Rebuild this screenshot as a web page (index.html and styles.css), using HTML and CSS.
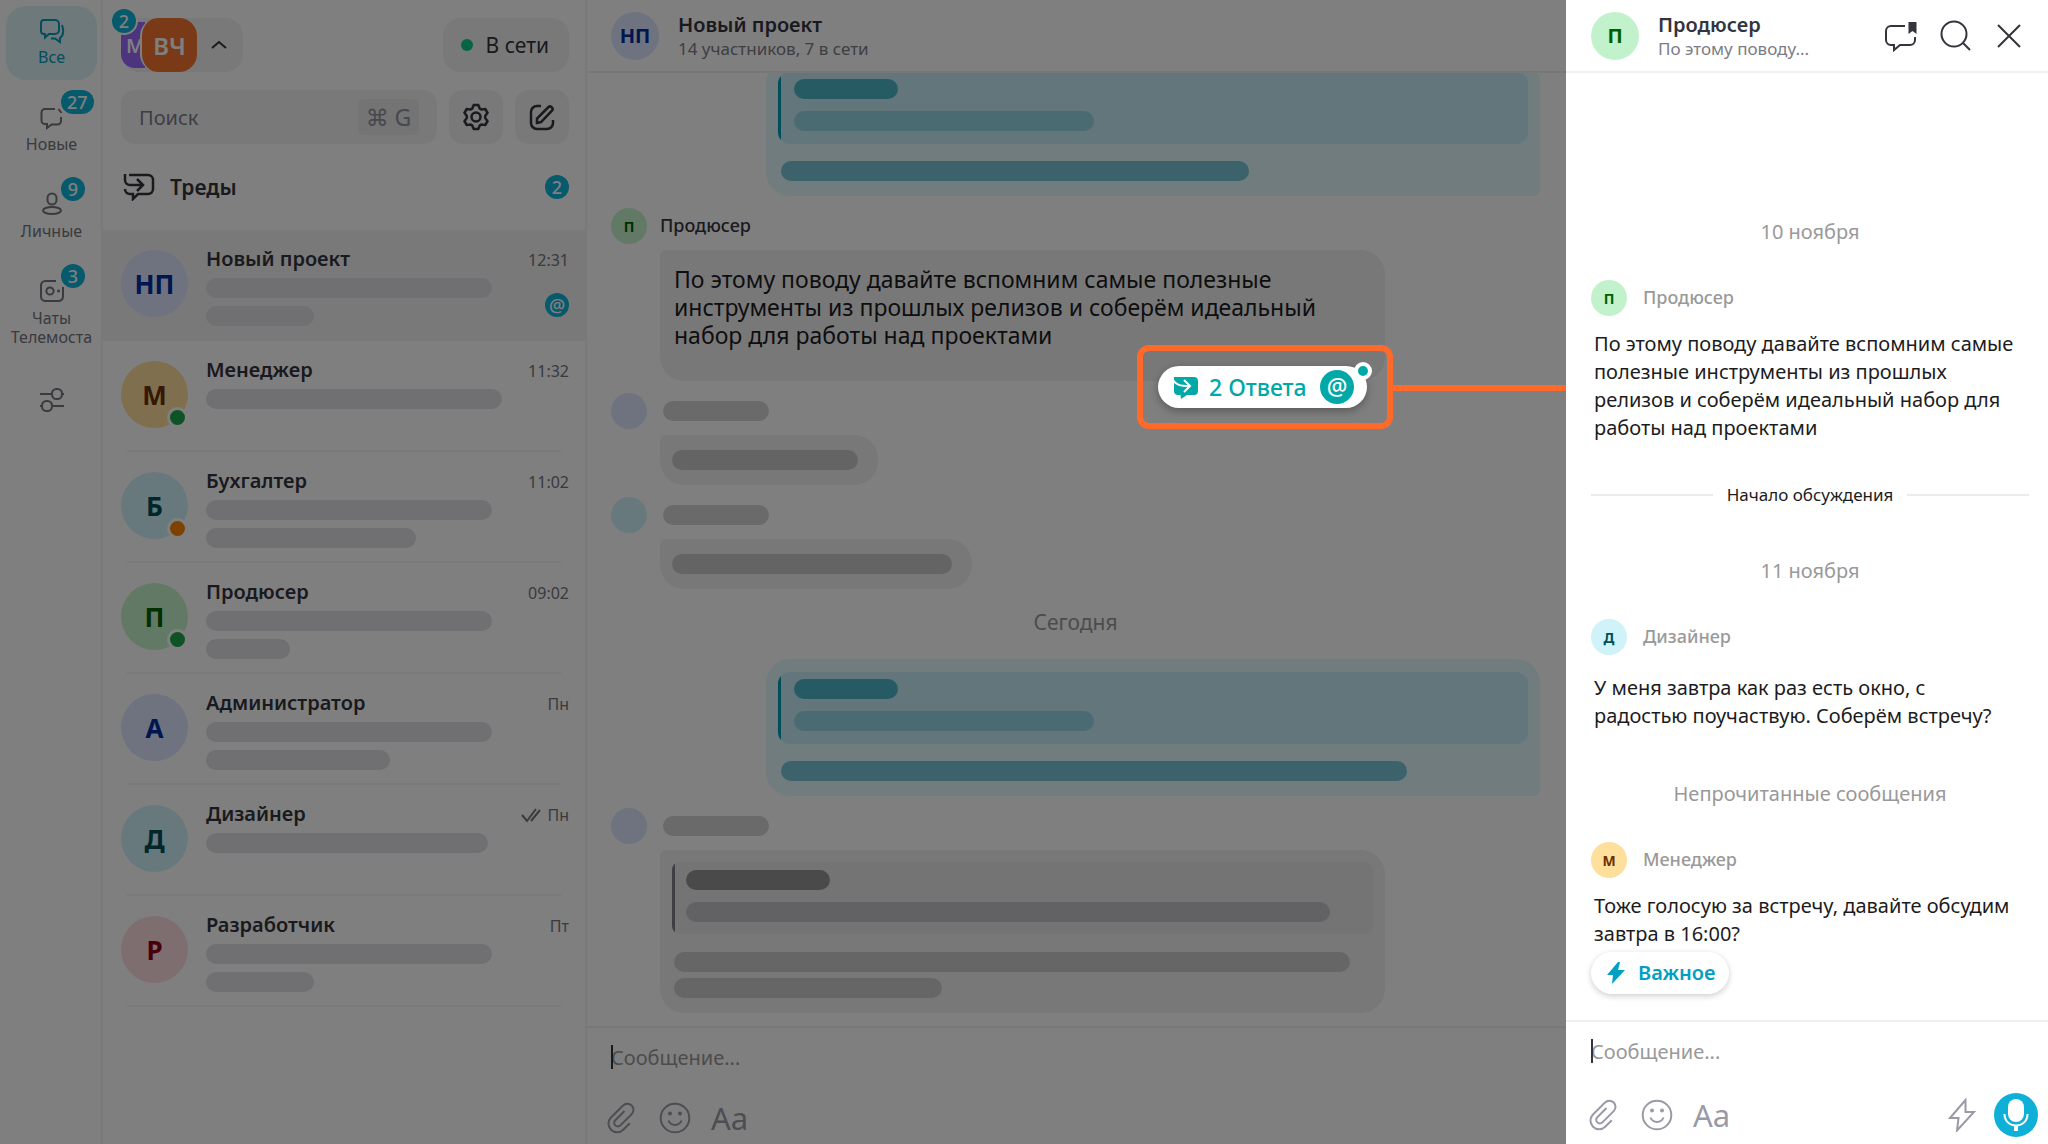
FILE: index.html
```
<!DOCTYPE html>
<html lang="ru">
  <head>
    <meta charset="UTF-8" />
    <meta name="viewport" content="width=device-width, initial-scale=1.0" />
    <title>Мессенджер — треды</title>
    <link rel="stylesheet" href="styles.css">
  </head>
  <body>
    <!-- Общие иконки -->
    <svg class="sprite" aria-hidden="true">
      <symbol id="icon-clip" viewBox="0 0 28 32">
        <path d="M17.5 9 8.3 18.2a3.6 3.6 0 0 0 0 5.2 3.6 3.6 0 0 0 5.1 0L24.7 12.1a6 6 0 0 0 0-8.6 6 6 0 0 0-8.7 0L4 15.500a8.6 8.6 0 0 0 0 12.200 8.6 8.6 0 0 0 12.200 0l6.600-6.500" />
      </symbol>
      <symbol id="icon-smile" viewBox="0 0 32 32">
        <circle cx="16" cy="16" r="14.3" />
        <path d="M9.500 18.500a7 7 0 0 0 13 0" />
        <circle class="dot" cx="11" cy="11.500" r="2" />
        <circle class="dot" cx="21" cy="11.500" r="2" />
      </symbol>
    </svg>

    <div class="app">
      <nav class="rail">
        <a href="#" class="rail-item active">
          <svg class="icon" viewBox="0 0 28 28">
            <path d="M6 4h11a4 4 0 0 1 4 4v6a4 4 0 0 1-4 4h-6l-4 3.500V18H6a3 3 0 0 1-3-3V7a3 3 0 0 1 3-3z" />
            <path d="M24 9c1.500 4 1.500 8 0 11l-2 2v4l-5-3.500h-4" />
          </svg>
          <span>Все</span>
        </a>
        <a href="#" class="rail-item">
          <svg class="icon" viewBox="0 0 28 28">
            <path d="M17 6H7a3.500 3.500 0 0 0-3.500 3.500v8A3.500 3.500 0 0 0 7 21h2v4l4.500-3.500h6A3.500 3.500 0 0 0 23 18v-4M20.500 6l3 4" />
          </svg>
          <span>Новые</span>
          <span class="badge">27</span>
        </a>
        <a href="#" class="rail-item">
          <svg class="icon" viewBox="0 0 28 28">
            <rect x="9.500" y="3.500" width="9" height="11" rx="4.500" />
            <ellipse cx="14" cy="20.500" rx="9" ry="3.600" />
          </svg>
          <span>Личные</span>
          <span class="badge">9</span>
        </a>
        <a href="#" class="rail-item">
          <svg class="icon" viewBox="0 0 28 28">
            <path d="M18 4H7.500A4.500 4.500 0 0 0 3 8.500v11A4.500 4.500 0 0 0 7.500 24h13a4.500 4.500 0 0 0 4.500-4.500V10" />
            <circle cx="12" cy="14" r="3.600" />
            <circle class="dot" cx="20.500" cy="14" r="1.500" />
          </svg>
          <span>Чаты Телемоста</span>
          <span class="badge">3</span>
        </a>
        <button class="rail-item filters" aria-label="Настроить папки">
          <svg class="icon" viewBox="0 0 28 28">
            <path d="M2 8h12M24 8h2M2 20h2M14 20h12" />
            <rect x="14" y="3" width="10" height="10" rx="4.500" />
            <rect x="4" y="15" width="10" height="10" rx="4.500" />
          </svg>
        </button>
      </nav>

      <aside class="chats">
        <div class="account-bar">
          <button class="account">
            <span class="account-back">М</span>
            <span class="account-main">ВЧ</span>
            <svg class="icon" viewBox="0 0 20 20"><path d="m3 13 7-6 7 6" /></svg>
            <span class="badge">2</span>
          </button>
          <button class="status"><span class="status-dot"></span>В сети</button>
        </div>
        <div class="search-bar">
          <label class="search">
            <input type="text" placeholder="Поиск" aria-label="Поиск" />
            <kbd>⌘ G</kbd>
          </label>
          <button class="square" aria-label="Настройки">
            <svg class="icon" viewBox="0 0 28 28">
              <path stroke-width="2.5" d="M11.800 2h4.400l1.600 3.600 1.500.9 4-.5 2.200 3.800-2.300 3.300v1.800l2.300 3.300-2.200 3.800-4-.5-1.500.9-1.600 3.600h-4.400l-1.600-3.600-1.500-.9-4 .5-2.200-3.800 2.300-3.300v-1.800L2.500 9.800 4.700 6l4 .5 1.500-.9z" />
              <circle stroke-width="2.5" cx="14" cy="14" r="4.500" />
            </svg>
          </button>
          <button class="square" aria-label="Новый чат">
            <svg class="icon" viewBox="0 0 28 28">
              <path stroke-width="2.5" d="M13 3H9a6 6 0 0 0-6 6v11a6 6 0 0 0 6 6h10a6 6 0 0 0 6-6v-3" />
              <path stroke-width="2.5" d="M9 20v-4.500L20.500 4a2 2 0 0 1 2.800 0l.7.700a2 2 0 0 1 0 2.800L13 19z" />
            </svg>
          </button>
        </div>
        <a href="#" class="threads">
          <svg class="icon" viewBox="0 0 32 28">
            <path stroke-width="2.5" d="M6 2h19a5 5 0 0 1 5 5v9a5 5 0 0 1-5 5H15l-5 5v-5H7a5 5 0 0 1-5-5" />
            <path stroke-width="2.5" d="M2 1v6a5 5 0 0 0 5 5h12M14 6l6 6-6 6" />
          </svg>
          <span>Треды</span>
          <span class="badge">2</span>
        </a>

        <ul class="chat-list">
          <li class="chat selected">
            <span class="avatar large blue">НП</span>
            <div class="chat-body">
              <span class="chat-name">Новый проект</span>
              <time>12:31</time>
              <span class="line" style="width: 286px"></span>
              <span class="line" style="width: 108px"></span>
            </div>
            <span class="badge">@</span>
          </li>
          <li class="chat">
            <span class="avatar large yellow online">М</span>
            <div class="chat-body">
              <span class="chat-name">Менеджер</span>
              <time>11:32</time>
              <span class="line" style="width: 296px"></span>
            </div>
          </li>
          <li class="chat">
            <span class="avatar large cyan away">Б</span>
            <div class="chat-body">
              <span class="chat-name">Бухгалтер</span>
              <time>11:02</time>
              <span class="line" style="width: 286px"></span>
              <span class="line" style="width: 210px"></span>
            </div>
          </li>
          <li class="chat">
            <span class="avatar large green online">П</span>
            <div class="chat-body">
              <span class="chat-name">Продюсер</span>
              <time>09:02</time>
              <span class="line" style="width: 286px"></span>
              <span class="line" style="width: 84px"></span>
            </div>
          </li>
          <li class="chat">
            <span class="avatar large blue">А</span>
            <div class="chat-body">
              <span class="chat-name">Администратор</span>
              <time>Пн</time>
              <span class="line" style="width: 286px"></span>
              <span class="line" style="width: 184px"></span>
            </div>
          </li>
          <li class="chat">
            <span class="avatar large cyan">Д</span>
            <div class="chat-body">
              <span class="chat-name">Дизайнер</span>
              <time>
                <svg class="icon" viewBox="0 0 20 16"><path d="m1 8 5 6L15 2M10 14l9-11" /></svg>
                Пн
              </time>
              <span class="line" style="width: 282px"></span>
            </div>
          </li>
          <li class="chat">
            <span class="avatar large red">Р</span>
            <div class="chat-body">
              <span class="chat-name">Разработчик</span>
              <time>Пт</time>
              <span class="line" style="width: 286px"></span>
              <span class="line" style="width: 108px"></span>
            </div>
          </li>
        </ul>
      </aside>

      <main class="dialog">
        <header class="header">
          <span class="avatar medium blue">НП</span>
          <div class="header-text">
            <h1>Новый проект</h1>
            <p>14 участников, 7 в сети</p>
          </div>
        </header>

        <div class="messages">
          <div class="bubble own">
            <div class="quote">
              <span class="line dark" style="width: 104px"></span>
              <span class="line" style="width: 300px"></span>
            </div>
            <span class="line" style="width: 468px"></span>
          </div>

          <article class="message">
            <div class="author">
              <span class="avatar small green">П</span>
              <span class="author-name">Продюсер</span>
            </div>
            <div class="bubble wide">
              <p>По этому поводу давайте вспомним самые полезные<br>инструменты из прошлых релизов и соберём идеальный<br>набор для работы над проектами</p>
              <div class="callout">
                <button class="replies">
                  <svg class="replies-icon" viewBox="0 0 26 24">
                    <path d="M5 2h16a4 4 0 0 1 4 4v10a4 4 0 0 1-4 4h-7l-6 4-.5-4H5a4 4 0 0 1-4-4V2z" />
                    <path class="arrow" d="M0 5c3 5 7 6 16 6M11 5l6 6-6 6" />
                  </svg>
                  2 Ответа
                  <span class="mention">@</span>
                </button>
              </div>
            </div>
          </article>

          <article class="message">
            <div class="author">
              <span class="avatar small blue"></span>
              <span class="line name"></span>
            </div>
            <div class="bubble short"><span class="line" style="width: 186px"></span></div>
          </article>

          <article class="message">
            <div class="author">
              <span class="avatar small cyan"></span>
              <span class="line name"></span>
            </div>
            <div class="bubble short"><span class="line" style="width: 280px"></span></div>
          </article>

          <div class="today">Сегодня</div>

          <div class="bubble own">
            <div class="quote">
              <span class="line dark" style="width: 104px"></span>
              <span class="line" style="width: 300px"></span>
            </div>
            <span class="line" style="width: 626px"></span>
          </div>

          <article class="message">
            <div class="author">
              <span class="avatar small blue"></span>
              <span class="line name"></span>
            </div>
            <div class="bubble wide quoted">
              <div class="quote">
                <span class="line dark" style="width: 144px"></span>
                <span class="line" style="width: 644px"></span>
              </div>
              <span class="line" style="width: 676px"></span>
              <span class="line" style="width: 268px"></span>
            </div>
          </article>
        </div>

        <form class="composer">
          <div class="field">
            <input type="text" placeholder="Сообщение..." aria-label="Сообщение" />
          </div>
          <div class="tools">
            <button type="button" aria-label="Прикрепить файл"><svg class="icon clip"><use href="#icon-clip" /></svg></button>
            <button type="button" aria-label="Эмодзи"><svg class="icon smile"><use href="#icon-smile" /></svg></button>
            <button type="button" class="format" aria-label="Форматирование">Aa</button>
          </div>
        </form>
      </main>

      <!-- Затемнение под открытым тредом -->
      <div class="overlay"></div>

      <section class="thread">
        <header class="header">
          <span class="avatar medium green">П</span>
          <div class="header-text">
            <h2>Продюсер</h2>
            <p>По этому поводу...</p>
          </div>
          <div class="header-actions">
            <button aria-label="Закладки">
              <svg class="icon" viewBox="0 0 34 34">
                <path d="M21 7H7a5 5 0 0 0-5 5v9a5 5 0 0 0 5 5h3v5l6-5h10a5 5 0 0 0 5-5v-3" />
                <path class="solid" d="M24.500 3h8v12l-4-3-4 3z" />
              </svg>
            </button>
            <button aria-label="Поиск">
              <svg class="icon" viewBox="0 0 34 34">
                <circle cx="16" cy="15" r="12.500" />
                <path d="m25 24 7 7" />
              </svg>
            </button>
            <button aria-label="Закрыть">
              <svg class="icon" viewBox="0 0 34 34"><path d="m6 6 22 22M28 6 6 28" /></svg>
            </button>
          </div>
        </header>

        <div class="replies-list">
          <div class="date">10 ноября</div>
          <article class="reply">
            <div class="author">
              <span class="avatar small green">П</span>
              <span class="author-name">Продюсер</span>
            </div>
            <p>По этому поводу давайте вспомним самые<br>полезные инструменты из прошлых<br>релизов и соберём идеальный набор для<br>работы над проектами</p>
          </article>
          <div class="divider">Начало обсуждения</div>
          <div class="date">11 ноября</div>
          <article class="reply spaced">
            <div class="author">
              <span class="avatar small cyan">Д</span>
              <span class="author-name">Дизайнер</span>
            </div>
            <p>У меня завтра как раз есть окно, с<br>радостью поучаствую. Соберём встречу?</p>
          </article>
          <div class="date">Непрочитанные сообщения</div>
          <article class="reply">
            <div class="author">
              <span class="avatar small yellow">М</span>
              <span class="author-name">Менеджер</span>
            </div>
            <p>Тоже голосую за встречу, давайте обсудим<br>завтра в 16:00?</p>
            <button class="important">
              <svg viewBox="0 0 20 24"><path d="M12 1 1 14h6l-1 9 13-14h-7l2-8z" /></svg>
              Важное
            </button>
          </article>
        </div>

        <form class="composer">
          <div class="field">
            <input type="text" placeholder="Сообщение..." aria-label="Ответ в треде" />
          </div>
          <div class="tools">
            <button type="button" aria-label="Прикрепить файл"><svg class="icon clip"><use href="#icon-clip" /></svg></button>
            <button type="button" aria-label="Эмодзи"><svg class="icon smile"><use href="#icon-smile" /></svg></button>
            <button type="button" class="format" aria-label="Форматирование">Aa</button>
            <button type="button" class="bolt" aria-label="Важное сообщение">
              <svg class="icon" viewBox="0 0 28 34"><path d="M17.500 2 2 20h8.500L9 32.500 26 14h-8.500z" /></svg>
            </button>
            <button type="button" class="mic" aria-label="Голосовое сообщение">
              <svg viewBox="0 0 44 44">
                <rect x="14" y="6" width="16" height="23" rx="8" />
                <path d="M10.500 21c0 7 5 11.500 11.500 11.500S33.500 28 33.500 21" />
                <path class="stem" d="M22 32v6" />
              </svg>
            </button>
          </div>
        </form>
      </section>
    </div>
  </body>
</html>
```
FILE: styles.css
```
*,
*::before,
*::after {
  box-sizing: border-box;
}

body {
  margin: 0;
  font-family: 'Noto Sans', 'Open Sans', sans-serif;
  font-size: 20px;
  color: #34343c;
  background-color: #fff;
}

h1,
h2,
p,
ul {
  margin: 0;
  padding: 0;
}

a {
  color: inherit;
  text-decoration: none;
}

button,
input {
  font: inherit;
  color: inherit;
  border: none;
  background: none;
  padding: 0;
}

button {
  cursor: pointer;
}

input {
  width: 100%;
  outline: none;
}

.sprite {
  display: none;
}

.icon {
  flex: none;
  width: 28px;
  height: 28px;
  fill: none;
  stroke: currentColor;
  stroke-width: 2;
}

.icon .dot,
.dot {
  fill: currentColor;
  stroke: none;
}

.app {
  position: relative;
  display: flex;
  height: 100vh;
  overflow: hidden;
}

/* Затемняет всё, кроме треда и выделенной кнопки */
.overlay {
  position: absolute;
  inset: 0;
  z-index: 1;
  background-color: rgba(0, 0, 0, 0.5);
}

.badge {
  display: flex;
  align-items: center;
  justify-content: center;
  min-width: 24px;
  height: 24px;
  padding: 0 6px;
  border-radius: 12px;
  background-color: #0cb4d8;
  color: #fff;
  font-size: 18px;
  font-weight: 500;
  line-height: 24px;
}

/* Аватары */
.avatar {
  position: relative;
  flex: none;
  display: flex;
  align-items: center;
  justify-content: center;
  border-radius: 50%;
  font-weight: 700;
}

.avatar.large {
  width: 67px;
  height: 67px;
  font-size: 26px;
}

.avatar.medium {
  width: 48px;
  height: 48px;
  font-size: 20px;
}

.avatar.small {
  width: 36px;
  height: 36px;
  font-size: 14px;
}

.blue {
  background-color: #dce6ff;
  color: #002ca0;
}

.yellow {
  background-color: #ffdf9c;
  color: #6b3000;
}

.cyan {
  background-color: #cff3f8;
  color: #005058;
}

.green {
  background-color: #c2f2cb;
  color: #006000;
}

.red {
  background-color: #ffdce0;
  color: #900010;
}

.online::after,
.away::after {
  content: '';
  position: absolute;
  right: 0;
  bottom: 0;
  width: 21px;
  height: 21px;
  border: 3px solid #fff;
  border-radius: 50%;
  background-color: #1ea54c;
}

.away::after {
  background-color: #fa8200;
}

/* Заглушки вместо текста */
.line {
  display: block;
  height: 20px;
  max-width: 100%;
  border-radius: 10px;
  background-color: #e0e0e6;
}

/* Левая панель */
.rail {
  flex: none;
  display: flex;
  flex-direction: column;
  gap: 13px;
  width: 103px;
  padding: 6px 4px 6px 6px;
  border-right: 2px solid #f2f2f3;
}

.rail-item {
  position: relative;
  display: flex;
  flex-direction: column;
  align-items: center;
  gap: 4px;
  min-height: 74px;
  padding-top: 10px;
  border-radius: 20px;
  color: #74747e;
  font-size: 16px;
  line-height: 19px;
  text-align: center;
}

.rail-item .badge {
  position: absolute;
  top: -3px;
  left: 55px;
}

.rail-item.active {
  background-color: #daf2f6;
  color: #0a9ab8;
}

.rail-item.filters {
  margin-top: 16px;
}

/* Список чатов */
.chats {
  flex: none;
  width: 484px;
  border-right: 2px solid #f2f2f3;
}

.account-bar,
.search-bar {
  display: flex;
  gap: 12px;
  padding: 18px 16px 0 18px;
}

.account-bar {
  justify-content: space-between;
}

.account {
  position: relative;
  display: flex;
  align-items: center;
  height: 54px;
  padding-right: 14px;
  border-radius: 18px;
  background-color: #f2f2f3;
  color: #34343c;
}

.account-back,
.account-main {
  display: flex;
  align-items: center;
  color: #fff;
  font-weight: 600;
}

.account-back {
  width: 24px;
  height: 46px;
  padding-left: 5px;
  border-radius: 14px 0 0 14px;
  background-color: #9868ff;
  overflow: hidden;
}

.account-main {
  justify-content: center;
  width: 57px;
  height: 54px;
  margin-left: -5px;
  margin-right: 12px;
  border-left: 2px solid #fff;
  border-radius: 18px;
  background-color: #f4742f;
  font-size: 24px;
}

.account .icon {
  width: 20px;
  height: 20px;
}

.account .badge {
  position: absolute;
  top: -9px;
  left: -9px;
  box-shadow: 0 0 0 2px #fff;
}

.status {
  display: flex;
  align-items: center;
  gap: 13px;
  height: 54px;
  padding: 0 20px 0 18px;
  border-radius: 18px;
  background-color: #f2f2f3;
  font-size: 21px;
}

.status-dot {
  width: 12px;
  height: 12px;
  border-radius: 50%;
  background-color: #0cc88c;
}

.search {
  flex: 1;
  display: flex;
  align-items: center;
  height: 54px;
  padding: 0 18px;
  border-radius: 14px;
  background-color: #f2f2f3;
}

.search input::placeholder {
  color: #7c7c88;
}

.search kbd {
  flex: none;
  width: 61px;
  border-radius: 6px;
  background-color: #e9e9eb;
  color: #9090a0;
  font-family: 'Noto Sans', 'DejaVu Sans', sans-serif;
  font-size: 23px;
  line-height: 36px;
  text-align: center;
}

.square {
  display: flex;
  align-items: center;
  justify-content: center;
  width: 54px;
  height: 54px;
  border-radius: 14px;
  background-color: #f2f2f3;
}

.threads {
  display: flex;
  align-items: center;
  gap: 15px;
  height: 86px;
  padding: 0 16px 0 20px;
  font-size: 21px;
  font-weight: 600;
}

.threads .icon {
  width: 32px;
}

.threads .badge {
  margin-left: auto;
}

.chat-list {
  list-style: none;
}

.chat {
  position: relative;
  display: flex;
  gap: 18px;
  height: 111px;
  padding: 20px 16px 0 18px;
}

.chat:not(.selected)::after {
  content: '';
  position: absolute;
  right: 24px;
  bottom: 0;
  left: 24px;
  height: 2px;
  background-color: #f2f2f3;
}

.chat.selected {
  background-color: #f2f2f2;
}

.chat-body {
  flex: 1;
  display: grid;
  grid-template-columns: 1fr auto;
  grid-auto-rows: 20px;
  gap: 8px 0;
}

.chat-name {
  font-size: 20px;
  font-weight: 600;
  line-height: 18px;
}

.chat time {
  display: flex;
  align-items: center;
  gap: 6px;
  color: #74747e;
  font-size: 16px;
  line-height: 18px;
}

.chat time .icon {
  width: 20px;
  height: 16px;
}

.chat-body .line {
  grid-column: 1 / 3;
}

.chat .badge {
  position: absolute;
  right: 16px;
  top: 63px;
  padding: 0;
}

/* Диалог */
.dialog {
  flex: 1;
  display: flex;
  flex-direction: column;
  min-width: 0;
}

.header {
  flex: none;
  display: flex;
  align-items: center;
  gap: 19px;
  height: 73px;
  padding: 0 22px 0 24px;
  border-bottom: 2px solid #f0f0f0;
}

.header h1,
.header h2 {
  font-size: 20px;
  font-weight: 600;
  line-height: 25px;
}

.header p {
  color: #7c7c88;
  font-size: 17px;
  line-height: 23px;
}

.messages {
  flex: 1;
  display: flex;
  flex-direction: column;
  justify-content: flex-end;
  gap: 12px;
  min-height: 0;
  padding: 0 26px 13px 24px;
  overflow: hidden;
}

.author {
  display: flex;
  align-items: center;
  gap: 13px;
}

.author-name {
  padding-bottom: 2px;
  font-size: 18px;
  font-weight: 500;
}

.line.name {
  width: 106px;
  margin-left: 3px;
  background-color: #d4d4d4;
}

.bubble {
  position: relative;
  width: fit-content;
  max-width: 100%;
  margin: 6px 0 0 49px;
  border-radius: 6px 24px 24px 24px;
  background-color: #f0f0f0;
}

.bubble.wide {
  width: 725px;
  padding: 15px 14px 32px;
}

.bubble p {
  color: #1c1c1e;
  font-size: 23px;
  line-height: 28px;
  white-space: nowrap;
}

.bubble.short {
  padding: 15px 20px 15px 12px;
}

.bubble.short .line {
  background-color: #c8c8c8;
}

.bubble.wide.quoted {
  display: grid;
  gap: 6px;
  padding: 12px 12px 15px;
}

.bubble.quoted > .line {
  margin-left: 2px;
  background-color: #ccc;
}

.bubble.own {
  align-self: flex-end;
  width: 774px;
  margin: 0;
  padding: 13px 12px 15px;
  border-radius: 24px 24px 6px 24px;
  background-color: #e0f8fa;
}

/* Цитата с полосой слева */
.quote {
  display: grid;
  gap: 12px;
  margin-bottom: 17px;
  padding: 7px 16px 13px;
  border-radius: 12px;
  background: linear-gradient(to right, #009ab8 3px, #c4ecf8 3px);
}

.own .line {
  margin-left: 3px;
  background-color: #78c4d6;
}

.own .quote .line {
  margin-left: 0;
  background-color: #94d6e4;
}

.own .quote .line.dark {
  background-color: #4eb6c8;
}

.quoted .quote {
  margin-bottom: 12px;
  padding: 8px 14px 12px;
  border-radius: 8px;
  background: linear-gradient(to right, #7c7c88 3px, #e9e9e9 3px);
}

.quoted .quote .line {
  background-color: #c4c4ca;
}

.quoted .quote .line.dark {
  background-color: #959595;
}

.today {
  padding-bottom: 4px;
  color: #999;
  font-size: 21px;
  line-height: 42px;
  text-align: center;
}

/* Рамка вокруг кнопки с ответами и линия к треду */
.callout {
  position: absolute;
  right: -8px;
  bottom: -48px;
  z-index: 2;
  padding: 15px 20px 15px 15px;
  border: 6px solid #ff6a2b;
  border-radius: 12px;
}

.callout::after {
  content: '';
  position: absolute;
  top: 34px;
  left: 100%;
  width: 100vw;
  height: 6px;
  background-color: #ff6a2b;
}

.replies {
  position: relative;
  display: flex;
  align-items: center;
  gap: 10px;
  width: 209px;
  height: 42px;
  padding: 0 13px 0 15px;
  border-radius: 21px;
  background-color: #fff;
  box-shadow: 0 3px 8px rgba(0, 0, 0, 0.3);
  color: #00a8a8;
  font-size: 23px;
  font-weight: 500;
  line-height: 40px;
  white-space: nowrap;
}

.replies::after {
  content: '';
  position: absolute;
  top: -4px;
  right: -5px;
  width: 18px;
  height: 18px;
  border: 4px solid #fff;
  border-radius: 50%;
  background-color: #00a8a8;
}

.replies-icon {
  flex: none;
  width: 26px;
  height: 24px;
  fill: #00a8a8;
}

.replies-icon .arrow {
  fill: none;
  stroke: #fff;
  stroke-width: 2;
}

.mention {
  flex: none;
  width: 34px;
  height: 34px;
  margin-left: auto;
  border-radius: 50%;
  background-color: #00a8a8;
  color: #fff;
  line-height: 32px;
}

/* Поле ввода */
.composer {
  flex: none;
  height: 118px;
  padding: 13px 10px 0 20px;
  border-top: 2px solid #f0f0f0;
}

.field {
  position: relative;
  margin-left: 4px;
}

.field::before {
  content: '';
  position: absolute;
  top: 4px;
  left: 0;
  width: 2px;
  height: 24px;
  background-color: #34343c;
}

.field input {
  height: 32px;
  font-size: 20px;
}

.field input::placeholder {
  color: #999;
}

.tools {
  display: flex;
  align-items: center;
  gap: 24px;
  height: 44px;
  margin-top: 23px;
  color: #9a9aa6;
}

.tools button {
  display: flex;
}

.tools .clip {
  height: 32px;
}

.tools .smile {
  width: 32px;
  height: 32px;
}

.tools .format {
  margin-left: -4px;
  font-size: 31px;
  line-height: 44px;
}

.tools .bolt {
  margin-right: -6px;
  margin-left: auto;
}

.tools .bolt .icon {
  height: 34px;
}

.mic svg {
  width: 44px;
  height: 44px;
  border-radius: 50%;
  background-color: #0eb0d8;
  fill: #fff;
}

.mic path {
  fill: none;
  stroke: #fff;
  stroke-width: 2;
}

.mic .stem {
  stroke-width: 4;
}

/* Тред */
.thread {
  position: relative;
  z-index: 3;
  flex: none;
  display: flex;
  flex-direction: column;
  width: 482px;
  background-color: #fff;
}

.thread .header {
  padding-left: 25px;
}

.header-actions {
  display: flex;
  gap: 20px;
  margin-left: auto;
}

.header-actions button {
  display: flex;
}

.header-actions .icon {
  width: 34px;
  height: 34px;
}

.icon .solid {
  fill: currentColor;
  stroke: none;
}

.replies-list {
  flex: 1;
  display: flex;
  flex-direction: column;
  justify-content: flex-end;
  min-height: 0;
  padding: 0 19px 26px 25px;
  overflow: hidden;
}

.replies-list .date {
  color: #999;
  line-height: 28px;
  text-align: center;
}

.reply {
  margin: 34px 0 39px;
}

.reply .author {
  gap: 16px;
}

.reply .author-name {
  color: #999;
}

.reply p {
  margin: 14px 0 0 3px;
  color: #1c1c1e;
  line-height: 28px;
  white-space: nowrap;
}

.reply.spaced p {
  margin-top: 19px;
}

.reply.spaced {
  margin-bottom: 50px;
}

.reply:last-child {
  margin-bottom: 0;
}

.divider {
  display: flex;
  align-items: center;
  gap: 14px;
  margin-bottom: 48px;
  color: #1c1c1e;
  font-size: 17px;
  line-height: 28px;
}

.divider::before,
.divider::after {
  content: '';
  flex: 1;
  height: 2px;
  background-color: #ececec;
}

.important {
  display: flex;
  align-items: center;
  gap: 12px;
  height: 42px;
  margin-top: 4px;
  padding: 0 14px 0 15px;
  border-radius: 21px;
  background-color: #fff;
  box-shadow: 0 2px 6px rgba(0, 0, 0, 0.2);
  color: #00a0c4;
  font-weight: 600;
  line-height: 40px;
}

.important svg {
  width: 20px;
  height: 24px;
  fill: currentColor;
}

.thread .composer {
  height: 124px;
  padding-left: 23px;
}

.thread .field {
  margin-left: 2px;
}

.thread .tools {
  margin-top: 26px;
}
```
